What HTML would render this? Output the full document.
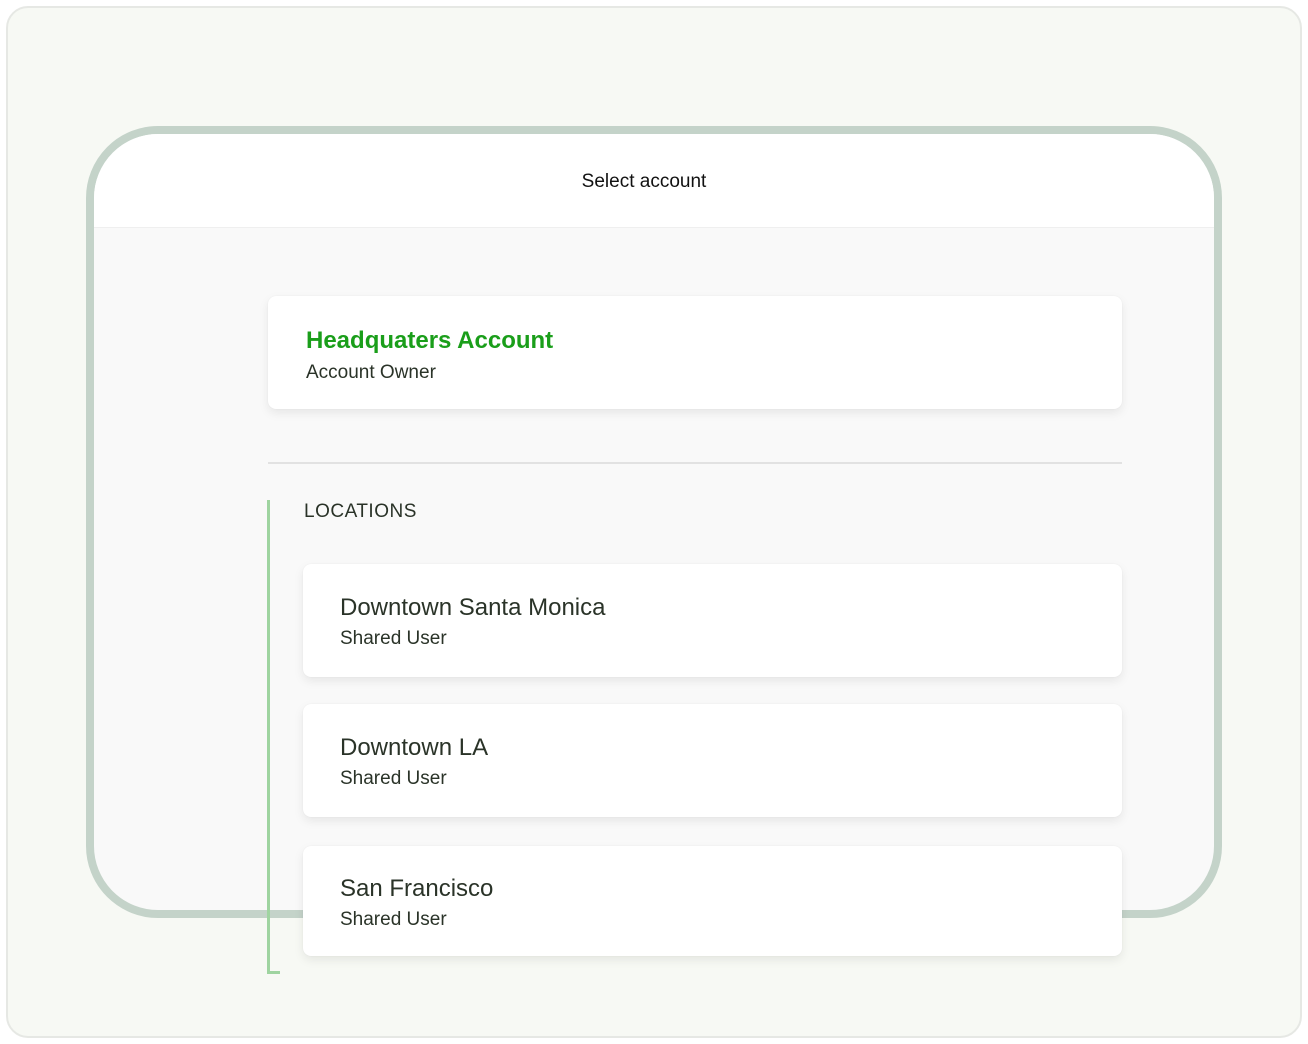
<!DOCTYPE html>
<html><head><style>
*{margin:0;padding:0;box-sizing:border-box}
body{width:1308px;height:1044px;background:#fff;font-family:"Liberation Sans",sans-serif;position:relative;overflow:hidden}
.outer{position:absolute;left:6px;top:6px;width:1296px;height:1032px;background:#f7f9f4;border:2px solid #e6e8e4;border-radius:22px}
.dev{position:absolute;left:86px;top:126px;width:1136px;height:792px;border:8px solid #c4d3c9;border-radius:72px;background:#f9f9f9;overflow:hidden}
.hdr{position:absolute;left:0;top:0;right:0;height:94px;background:#fff;border-bottom:1px solid #efefef;text-align:center;font-size:19px;color:#111;padding-top:37px;padding-right:20px}
.card{position:absolute;background:#fff;border-radius:8px;box-shadow:0 4px 10px rgba(0,0,0,0.08),0 0 1px rgba(0,0,0,0.08)}
.t{position:absolute;left:37px;font-size:24px;color:#2a3328}
.s{position:absolute;left:37px;font-size:19px;color:#2a3328}
</style></head><body>
<div class="outer"></div>
<div class="dev"><div class="hdr">Select account</div></div>
<div class="card" style="left:268px;top:296px;width:854px;height:113px">
<div class="t" style="top:31px;left:38px;color:#1a9e1a;font-weight:bold">Headquaters Account</div>
<div class="s" style="top:66px;left:38px">Account Owner</div></div>
<div style="position:absolute;left:268px;top:462px;width:854px;height:2px;background:#e2e2e2"></div>
<div style="position:absolute;left:304px;top:501px;font-size:19px;color:#2a3328;letter-spacing:0.5px">LOCATIONS</div>
<div style="position:absolute;left:267px;top:500px;width:3px;height:474px;background:#9fd4a0"></div>
<div style="position:absolute;left:267px;top:971px;width:13px;height:3px;background:#9fd4a0"></div>
<div class="card" style="left:303px;top:564px;width:819px;height:113px">
<div class="t" style="top:30px">Downtown Santa Monica</div><div class="s" style="top:64px">Shared User</div></div>
<div class="card" style="left:303px;top:704px;width:819px;height:113px">
<div class="t" style="top:30px">Downtown LA</div><div class="s" style="top:64px">Shared User</div></div>
<div class="card" style="left:303px;top:846px;width:819px;height:110px">
<div class="t" style="top:29px">San Francisco</div><div class="s" style="top:63px">Shared User</div></div>
</body></html>
